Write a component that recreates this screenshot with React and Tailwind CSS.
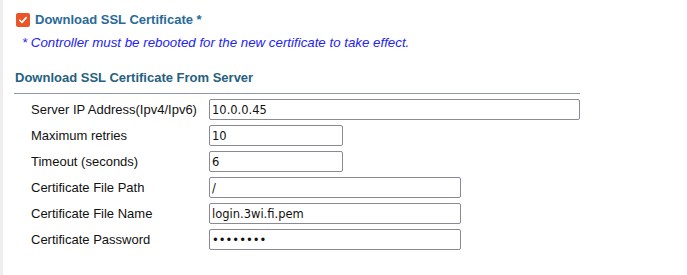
import React from "react"

const rows = [
    { label: "Server IP Address(Ipv4/Ipv6)", value: "10.0.0.45", width: "w-[371px]" },
    { label: "Maximum retries", value: "10", width: "w-[134px]" },
    { label: "Timeout (seconds)", value: "6", width: "w-[134px]" },
    { label: "Certificate File Path", value: "/", width: "w-[252px]" },
    { label: "Certificate File Name", value: "login.3wi.fi.pem", width: "w-[252px]" },
    { label: "Certificate Password", value: "password", width: "w-[252px]", type: "password" },
]

export default function App() {
    return (
        <div className="flex h-[275px] w-[687px] bg-white font-['Liberation_Sans',Arial,sans-serif]">
            <div className="w-[3px] shrink-0 bg-[#eeeeee]"></div>
            <div className="flex-1 pl-[13px] pt-[11px]">
                {/* Checkbox header */}
                <div className="flex items-center">
                    <span className="flex h-[14px] w-[14px] items-center justify-center rounded-[2px] bg-[#e8562a]">
                        <svg viewBox="0 0 12 12" className="h-[10px] w-[10px]">
                            <path d="M2.2 6.3 L4.8 8.8 L9.8 3.2" fill="none" stroke="white" strokeWidth="2" strokeLinecap="round" strokeLinejoin="round" />
                        </svg>
                    </span>
                    <span className="ml-[5px] text-[13px] font-bold leading-[18px] text-[#2a6a98]">
                        Download SSL Certificate *
                    </span>
                </div>
                <div className="mt-[6px] pl-[6px] text-[13.3px] italic leading-[16px] text-[#2323f0]">
                    * Controller must be rebooted for the new certificate to take effect.
                </div>

                {/* Section */}
                <div className="-ml-[1px] mt-[19px] text-[13px] font-bold leading-[16px] text-[#27607f]">
                    Download SSL Certificate From Server
                </div>
                <div className="-ml-[2px] mt-[7px] h-px w-[566px] bg-[#8f97a8]"></div>

                <div className="mt-[5px] flex flex-col gap-[5px] pl-[15px]">
                    {rows.map((row) => (
                        <div key={row.label} className="flex h-[21px] items-center">
                            <div className="w-[178px] shrink-0 text-[13px] text-[#111111]">{row.label}</div>
                            <input
                                type={row.type || "text"}
                                defaultValue={row.value}
                                className={`${row.width} h-[21px] rounded-[2px] border border-[#8a8a96] bg-white px-[2px] font-['DejaVu_Sans',Verdana,sans-serif] text-[11.5px] text-[#111111] outline-none`}
                            />
                        </div>
                    ))}
                </div>
            </div>
        </div>
    )
}
